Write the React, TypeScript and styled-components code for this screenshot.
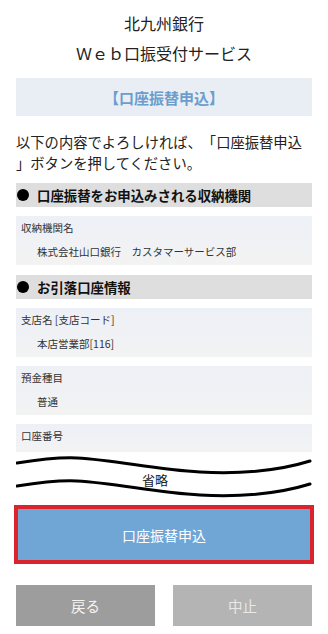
import styled, { createGlobalStyle } from 'styled-components';

const GlobalStyle = createGlobalStyle`
  html, body {
    margin: 0;
    padding: 0;
    background: #fff;
  }
  body {
    font-family: "Noto Sans CJK JP", "Noto Sans", sans-serif;
    color: #222;
    text-spacing-trim: space-all;
  }
`;

interface IField {
  label: string;
  value?: string;
}

const payeeFields: IField[] = [
  { label: '収納機関名', value: '株式会社山口銀行　カスタマーサービス部' },
];

const accountFields: IField[] = [
  { label: '支店名 [支店コード]', value: '本店営業部[116]' },
  { label: '預金種目', value: '普通' },
  { label: '口座番号' },
];

const Wave = ({ offset }: { offset: number }) => (
  <path
    d={`M1 ${9 + offset} C 20 ${6 + offset}, 40 ${3 + offset}, 61 ${4 + offset} C 100 ${6 + offset}, 140 ${16 + offset}, 184 ${18 + offset} C 222 ${20 + offset}, 262 ${17 + offset}, 294 ${7 + offset}`}
    fill="none"
    stroke="#000"
    strokeWidth="3"
    strokeLinecap="round"
  />
);

const App = () => {
  return (
    <>
      <GlobalStyle />
      <Page>
        <Heading>
          <HeadingLine>北九州銀行</HeadingLine>
          <HeadingLine>Ｗｅｂ口振受付サービス</HeadingLine>
        </Heading>
        <TitleBox>【口座振替申込】</TitleBox>
        <Notice>
          以下の内容でよろしければ、「口座振替申込
          <br />」ボタンを押してください。
        </Notice>

        <SectionHeader>
          <Bullet />
          口座振替をお申込みされる収納機関
        </SectionHeader>
        {payeeFields.map((field) => (
          <FieldBox key={field.label} $labelOnly={!field.value}>
            <FieldLabel>{field.label}</FieldLabel>
            {field.value && <FieldValue>{field.value}</FieldValue>}
          </FieldBox>
        ))}

        <SectionHeader>
          <Bullet />
          お引落口座情報
        </SectionHeader>
        {accountFields.map((field) => (
          <FieldBox key={field.label} $labelOnly={!field.value}>
            <FieldLabel>{field.label}</FieldLabel>
            {field.value && <FieldValue>{field.value}</FieldValue>}
          </FieldBox>
        ))}

        <OmitArea>
          <svg width="296" height="46" viewBox="0 0 296 46">
            <Wave offset={0} />
            <Wave offset={23} />
          </svg>
          <OmitText>省略</OmitText>
        </OmitArea>

        <SubmitButton>口座振替申込</SubmitButton>

        <ButtonRow>
          <GrayButton $tone="dark">戻る</GrayButton>
          <GrayButton $tone="light">中止</GrayButton>
        </ButtonRow>
      </Page>
    </>
  );
};

export default App;

const Page = styled.main`
  width: 328px;
  box-sizing: border-box;
  padding: 8px 16px 8px 16px;
  display: flex;
  flex-direction: column;
`;

const Heading = styled.header`
  display: flex;
  flex-direction: column;
  align-items: center;
`;

const HeadingLine = styled.div`
  font-size: 16px;
  line-height: 30px;
  color: #222;
`;

const TitleBox = styled.h1`
  margin: 10px 0 0 0;
  height: 38px;
  display: flex;
  align-items: center;
  justify-content: center;
  background-color: #e9eef4;
  color: #6c9dcc;
  font-size: 15px;
  font-weight: 700;
`;

const Notice = styled.p`
  margin: 15px 0 0 0;
  font-size: 14.3px;
  line-height: 21px;
  color: #222;
  white-space: nowrap;
`;

const SectionHeader = styled.h2`
  margin: 10px 0 0 0;
  height: 24px;
  padding-left: 1px;
  display: flex;
  align-items: center;
  background-color: #dedede;
  font-size: 13.4px;
  font-weight: 700;
  color: #111;
  white-space: nowrap;
`;

const Bullet = styled.span`
  width: 12px;
  height: 12px;
  border-radius: 50%;
  background-color: #000;
  margin-right: 8px;
  flex-shrink: 0;
`;

const FieldBox = styled.section<{ $labelOnly: boolean }>`
  margin-top: 9px;
  padding: 4px 5px ${({ $labelOnly }) => ($labelOnly ? '8px' : '5px')} 5px;
  background: linear-gradient(#edf0f6, #f3f3f3);
  display: flex;
  flex-direction: column;
  gap: 8px;
`;

const FieldLabel = styled.div`
  font-size: 10.5px;
  line-height: 16px;
  color: #333;
`;

const FieldValue = styled.div`
  padding-left: 16px;
  font-size: 10.5px;
  line-height: 16px;
  color: #333;
  white-space: nowrap;
`;

const OmitArea = styled.div`
  position: relative;
  margin-top: 2px;
  height: 46px;

  svg {
    display: block;
  }
`;

const OmitText = styled.span`
  position: absolute;
  left: 126px;
  top: 17px;
  font-size: 13px;
  line-height: 18px;
  color: #222;
`;

const SubmitButton = styled.button`
  margin: 5px -2px 0 -2px;
  height: 59px;
  border: 4px solid #d9232d;
  background-color: #6fa6d6;
  color: #fff;
  font-family: inherit;
  font-size: 14px;
`;

const ButtonRow = styled.div`
  margin-top: 21px;
  display: flex;
  justify-content: space-between;
`;

const GrayButton = styled.button<{ $tone: 'dark' | 'light' }>`
  width: 139px;
  height: 41px;
  border: none;
  background-color: ${({ $tone }) => ($tone === 'dark' ? '#9d9d9d' : '#b4b4b4')};
  color: ${({ $tone }) => ($tone === 'dark' ? '#f4f4f4' : '#e8e8e8')};
  font-family: inherit;
  font-size: 14.5px;
`;
